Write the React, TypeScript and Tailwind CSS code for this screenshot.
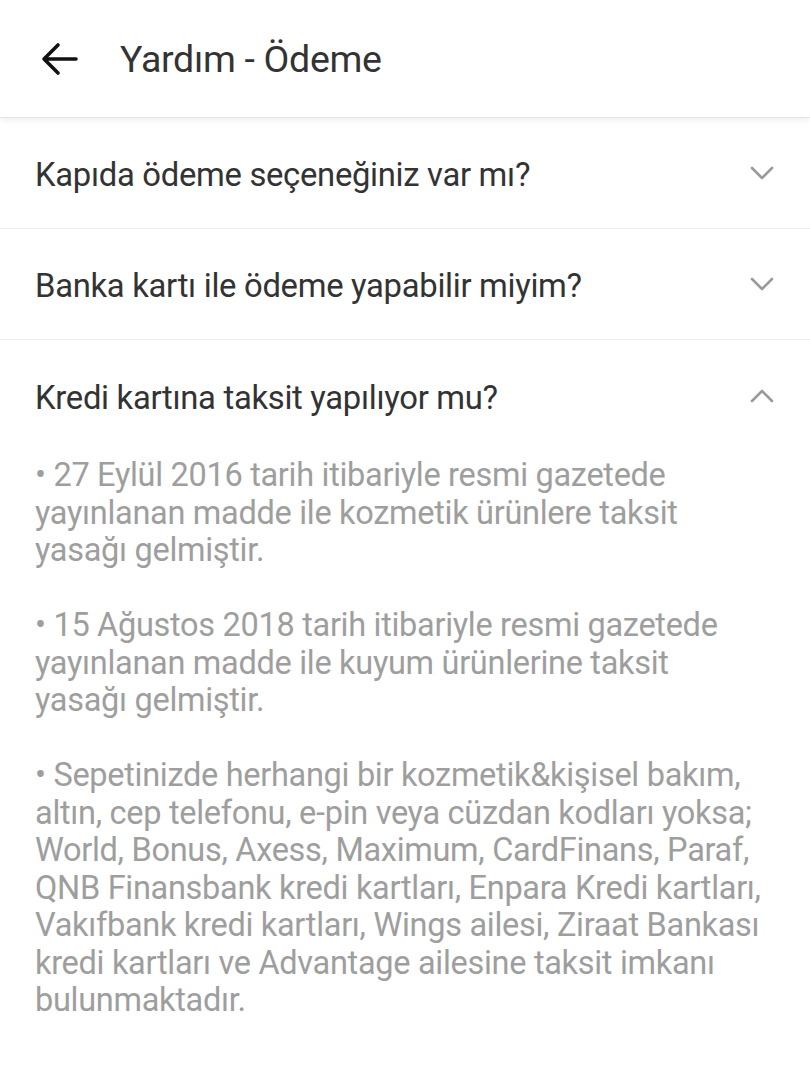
import React from "react";

const Chevron = ({ up }: { up?: boolean }) => (
  <svg width="26" height="16" viewBox="0 0 26 16" fill="none" className="shrink-0">
    <path
      d={up ? "M3 13 L13 3 L23 13" : "M3 3 L13 13 L23 3"}
      stroke="#9a9a9a"
      strokeWidth="2.6"
      strokeLinecap="round"
      strokeLinejoin="round"
    />
  </svg>
);

const Row = ({ q, up, border = true }: { q: string; up?: boolean; border?: boolean }) => (
  <div className={"flex items-center justify-between h-[111px] pl-[35px] pr-[35px] " + (border ? "border-b border-[#eeeeee]" : "")}>
    <span className="text-[32.8px] text-[#333333] leading-none tracking-[-0.3px] pt-[5px]">{q}</span>
    <Chevron up={up} />
  </div>
);

const P = ({ lines }: { lines: string[] }) => (
  <div className="mb-[37.5px]">
    {lines.map((l, i) => (
      <div key={i} className="whitespace-nowrap">{l}</div>
    ))}
  </div>
);

export default function App() {
  return (
    <div className="w-[810px] h-[1080px] bg-white overflow-hidden" style={{ fontFamily: "Roboto, 'Noto Sans', sans-serif" }}>
      <div className="h-[118px] flex items-center border-b border-[#e2e2e2] shadow-[0_3px_6px_rgba(0,0,0,0.06)] relative z-10">
        <svg width="40" height="36" viewBox="0 0 40 36" className="ml-[40px]">
          <path d="M36 18 H5 M18 4 L4 18 L18 32" stroke="#111" strokeWidth="3.6" fill="none" strokeLinecap="round" strokeLinejoin="round" />
        </svg>
        <span className="ml-[40px] text-[37.5px] text-[#333333] tracking-[-0.3px] leading-none pt-[2px]">Yardım - Ödeme</span>
      </div>
      <Row q="Kapıda ödeme seçeneğiniz var mı?" />
      <Row q="Banka kartı ile ödeme yapabilir miyim?" />
      <Row q="Kredi kartına taksit yapılıyor mu?" up border={false} />
      <div className="pl-[35px] text-[32.5px] leading-[37.5px] text-[#9e9e9e] mt-[6px] tracking-[-0.3px]">
        <P lines={["• 27 Eylül 2016 tarih itibariyle resmi gazetede", "yayınlanan madde ile kozmetik ürünlere taksit", "yasağı gelmiştir."]} />
        <P lines={["• 15 Ağustos 2018 tarih itibariyle resmi gazetede", "yayınlanan madde ile kuyum ürünlerine taksit", "yasağı gelmiştir."]} />
        <P
          lines={[
            "• Sepetinizde herhangi bir kozmetik&kişisel bakım,",
            "altın, cep telefonu, e-pin veya cüzdan kodları yoksa;",
            "World, Bonus, Axess, Maximum, CardFinans, Paraf,",
            "QNB Finansbank kredi kartları, Enpara Kredi kartları,",
            "Vakıfbank kredi kartları, Wings ailesi, Ziraat Bankası",
            "kredi kartları ve Advantage ailesine taksit imkanı",
            "bulunmaktadır.",
          ]}
        />
      </div>
    </div>
  );
}
